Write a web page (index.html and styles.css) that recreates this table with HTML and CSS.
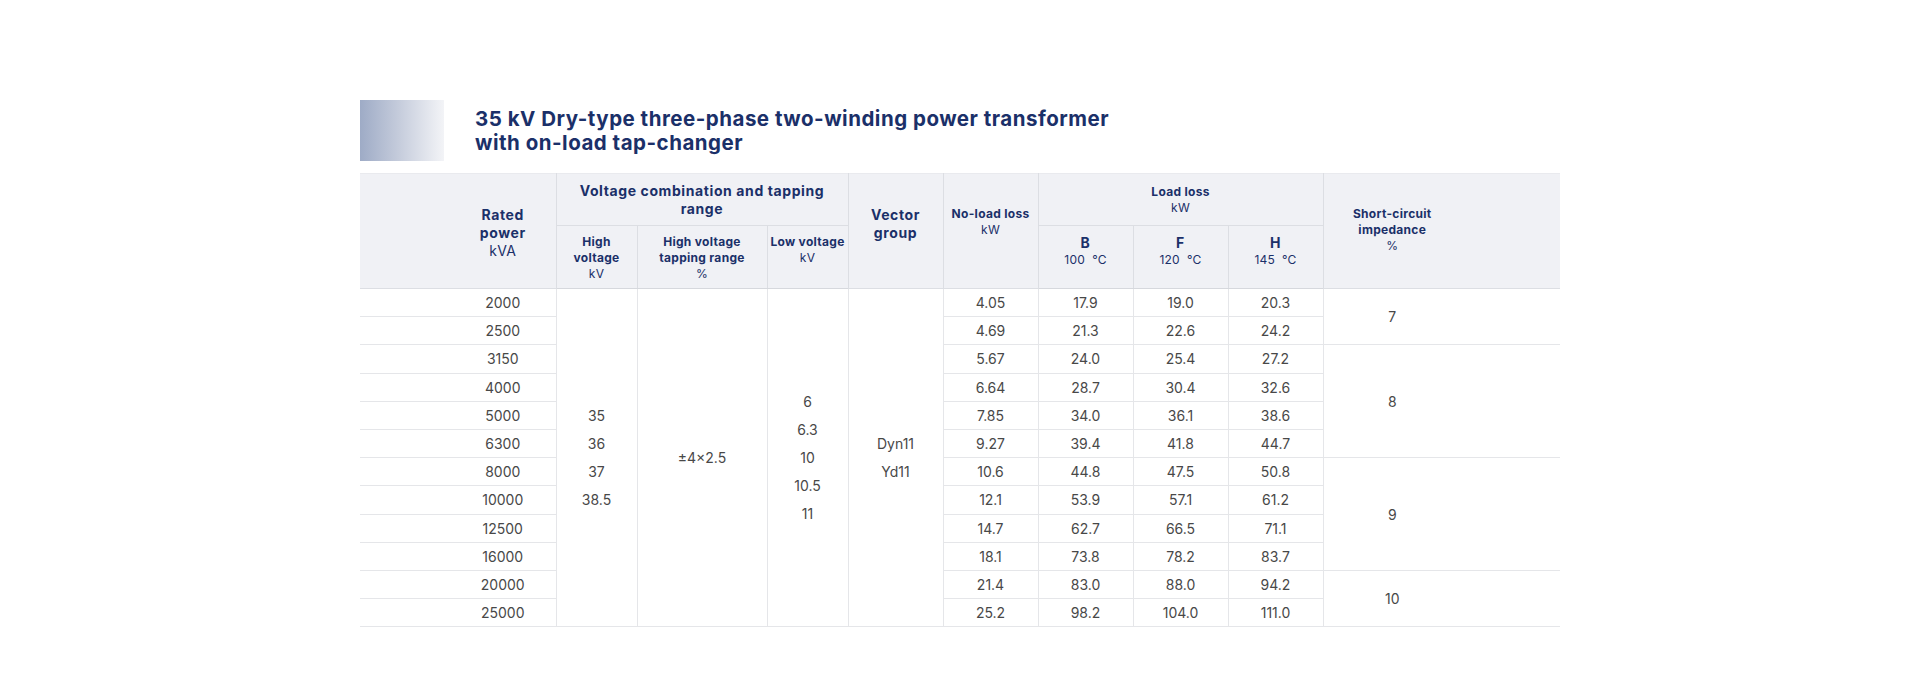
FILE: index.html
```html
<!DOCTYPE html>
<html lang="en">
<head>
<meta charset="utf-8">
<title>35 kV Dry-type transformer with on-load tap-changer</title>
<link rel="stylesheet" href="styles.css">
</head>
<body>
<main class="page">
  <header class="heading">
    <div class="heading-mark"></div>
    <h1 class="heading-title">35 kV Dry-type three-phase two-winding power transformer<br>with on-load tap-changer</h1>
  </header>
  <table class="spec">
    <colgroup>
      <col class="c-power">
      <col class="c-hv">
      <col class="c-tap">
      <col class="c-lv">
      <col class="c-vec">
      <col class="c-nl">
      <col class="c-b">
      <col class="c-f">
      <col class="c-h">
      <col class="c-imp">
    </colgroup>
    <thead>
      <tr class="hrow-top">
        <th rowspan="2" class="h-span h-first"><span class="t14">Rated<br>power</span><span class="u14">kVA</span></th>
        <th colspan="3" class="h-group"><span class="t14">Voltage combination and tapping<br>range</span></th>
        <th rowspan="2" class="h-span"><span class="t14">Vector<br>group</span></th>
        <th rowspan="2" class="h-span"><span class="t12">No-load loss</span><span class="u12">kW</span></th>
        <th colspan="3" class="h-group h-group-sm"><span class="t12">Load loss</span><span class="u12">kW</span></th>
        <th rowspan="2" class="h-span h-last"><span class="t12">Short-circuit<br>impedance</span><span class="u12">%</span></th>
      </tr>
      <tr class="hrow-sub">
        <th class="h-sub"><span class="t12">High<br>voltage</span><span class="u12">kV</span></th>
        <th class="h-sub"><span class="t12">High voltage<br>tapping range</span><span class="u12">%</span></th>
        <th class="h-sub"><span class="t12">Low voltage</span><span class="u12">kV</span></th>
        <th class="h-sub"><span class="t14">B</span><span class="u12">100&nbsp;&nbsp;°C</span></th>
        <th class="h-sub"><span class="t14">F</span><span class="u12">120&nbsp;&nbsp;°C</span></th>
        <th class="h-sub"><span class="t14">H</span><span class="u12">145&nbsp;&nbsp;°C</span></th>
      </tr>
    </thead>
    <tbody>
      <tr>
        <td class="first">2000</td>
        <td rowspan="12" class="merged">35<br>36<br>37<br>38.5</td>
        <td rowspan="12" class="merged">±4×2.5</td>
        <td rowspan="12" class="merged">6<br>6.3<br>10<br>10.5<br>11</td>
        <td rowspan="12" class="merged">Dyn11<br>Yd11</td>
        <td>4.05</td><td>17.9</td><td>19.0</td><td>20.3</td>
        <td rowspan="2" class="last">7</td>
      </tr>
      <tr><td class="first">2500</td><td>4.69</td><td>21.3</td><td>22.6</td><td>24.2</td></tr>
      <tr>
        <td class="first">3150</td><td>5.67</td><td>24.0</td><td>25.4</td><td>27.2</td>
        <td rowspan="4" class="last">8</td>
      </tr>
      <tr><td class="first">4000</td><td>6.64</td><td>28.7</td><td>30.4</td><td>32.6</td></tr>
      <tr><td class="first">5000</td><td>7.85</td><td>34.0</td><td>36.1</td><td>38.6</td></tr>
      <tr><td class="first">6300</td><td>9.27</td><td>39.4</td><td>41.8</td><td>44.7</td></tr>
      <tr>
        <td class="first">8000</td><td>10.6</td><td>44.8</td><td>47.5</td><td>50.8</td>
        <td rowspan="4" class="last">9</td>
      </tr>
      <tr><td class="first">10000</td><td>12.1</td><td>53.9</td><td>57.1</td><td>61.2</td></tr>
      <tr><td class="first">12500</td><td>14.7</td><td>62.7</td><td>66.5</td><td>71.1</td></tr>
      <tr><td class="first">16000</td><td>18.1</td><td>73.8</td><td>78.2</td><td>83.7</td></tr>
      <tr>
        <td class="first">20000</td><td>21.4</td><td>83.0</td><td>88.0</td><td>94.2</td>
        <td rowspan="2" class="last">10</td>
      </tr>
      <tr><td class="first">25000</td><td>25.2</td><td>98.2</td><td>104.0</td><td>111.0</td></tr>
    </tbody>
  </table>
</main>
</body>
</html>
```

FILE: styles.css
```css
html, body {
  margin: 0;
  padding: 0;
  background: #ffffff;
}

body {
  font-family: Inter, "Open Sans", "DejaVu Sans", sans-serif;
  color: #444444;
}

.page {
  width: 1200px;
  margin-left: 360px;
  padding-top: 100px;
}

.heading {
  display: flex;
  align-items: center;
  height: 61px;
}

.heading-mark {
  width: 84px;
  height: 61px;
  flex: none;
  background: linear-gradient(to right, #9eabc6 0%, #c4cbdb 45%, #f3f4f7 100%);
}

.heading-title {
  margin: 0 0 0 31px;
  font-size: 20.5px;
  line-height: 24px;
  font-weight: 700;
  color: #1b3069;
  letter-spacing: 0.5px;
}

.spec {
  margin-top: 12px;
  width: 1200px;
  table-layout: fixed;
  border-collapse: collapse;
  font-size: 14px;
}

.c-power { width: 196px; }
.c-hv { width: 81px; }
.c-tap { width: 130px; }
.c-lv { width: 81px; }
.c-vec { width: 95px; }
.c-nl { width: 95px; }
.c-b { width: 95px; }
.c-f { width: 95px; }
.c-h { width: 95px; }
.c-imp { width: 237px; }

.spec thead th {
  background: #f0f1f5;
  color: #1b3069;
  border: 1px solid #dcdee3;
  text-align: center;
  font-weight: normal;
  padding: 0;
}

.spec thead tr:first-child th {
  border-top: 1px solid #e9eaee;
}

.spec thead th:first-child {
  border-left: none;
}

.spec thead th.h-last {
  border-right: none;
}

.hrow-top { height: 52px; }
.hrow-sub { height: 63px; }

.t14, .u14, .t12, .u12 {
  display: block;
}

.t14 {
  font-size: 14px;
  line-height: 18px;
  font-weight: 700;
  letter-spacing: 0.6px;
}

.u14 {
  font-size: 14px;
  line-height: 18px;
  font-weight: 400;
  letter-spacing: 0.3px;
}

.t12 {
  font-size: 12px;
  line-height: 16px;
  font-weight: 700;
  letter-spacing: 0.3px;
}

.u12 {
  font-size: 12px;
  line-height: 16px;
  font-weight: 400;
  letter-spacing: 0.2px;
}

.spec th.h-span {
  vertical-align: top;
  padding-top: 32px;
}

.spec th.h-first {
  padding-left: 90px;
}

.spec th.h-last {
  padding-right: 99px;
}

.spec th.h-group {
  vertical-align: top;
  padding-top: 8px;
}

.spec th.h-group-sm {
  padding-top: 10px;
}

.spec th.h-sub {
  vertical-align: top;
  padding-top: 8px;
}

.spec thead tr.hrow-sub th {
  border-bottom: 1px solid #d6d8dd;
}

.spec tbody td {
  height: 27.2px;
  padding: 0;
  text-align: center;
  vertical-align: middle;
  font-size: 14px;
  line-height: 27px;
  color: #484848;
  border: 1px solid #e5e6e9;
}

.spec tbody td.first {
  border-left: none;
  padding-left: 90px;
}

.spec tbody td.last {
  border-right: none;
  padding-right: 99px;
}

.spec tbody td.merged {
  line-height: 28px;
}
```
